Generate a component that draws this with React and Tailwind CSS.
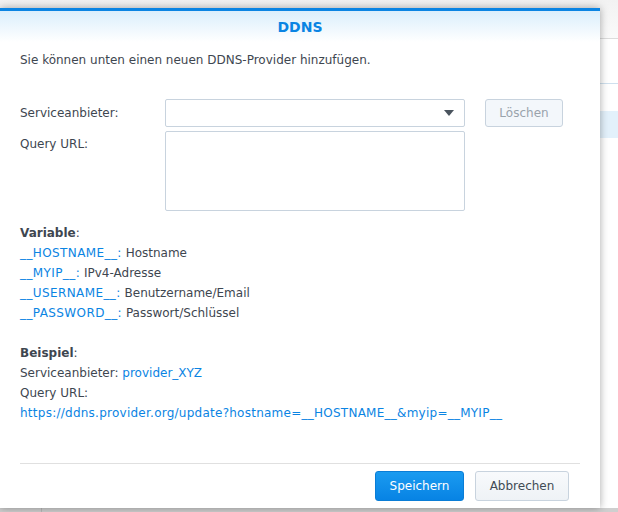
import React from "react";

export default function App() {
  const font = { fontFamily: '"DejaVu Sans", Verdana, sans-serif' };
  const vars = [
    ["__HOSTNAME__", "Hostname"],
    ["__MYIP__", "IPv4-Adresse"],
    ["__USERNAME__", "Benutzername/Email"],
    ["__PASSWORD__", "Passwort/Schlüssel"],
  ];
  return (
    <div
      className="relative w-[618px] h-[512px] overflow-hidden bg-[#f7f8f9]"
      style={font}
    >
      {/* background page */}
      <div className="absolute inset-0 flex flex-col">
        <div className="h-[39px] bg-gradient-to-b from-[#f2f2f2] to-[#fafafa] border-b border-[#dcdcdc]" />
        <div className="h-[45px] bg-white border-b border-[#cfe0ee]" />
        <div className="h-[27px] bg-white" />
        <div className="h-[27px] bg-[#e3f1fb]" />
        <div className="flex-1 bg-white" />
      </div>
      <div className="absolute left-0 right-0 bottom-0 h-[4px] bg-[#cfcfcf] flex">
        <div className="w-[42px] border-r border-[#b8b8b8]" />
      </div>

      {/* dialog */}
      <div className="absolute left-0 top-[8px] w-[600px] h-[500px] bg-white shadow-[0_0_8px_rgba(0,0,0,0.35)] flex flex-col">
        <div className="h-[3px] bg-[#0a84e3]" />
        <div className="h-[31px] bg-gradient-to-b from-[#daeefc] to-white flex items-center justify-center">
          <span className="text-[14px] font-bold text-[#0a84e3] leading-none">DDNS</span>
        </div>
        <div className="flex-1 flex flex-col px-[20px] text-[12px] text-[#3e4650] leading-[20px]">
          <div className="mt-[8px]">Sie können unten einen neuen DDNS-Provider hinzufügen.</div>

          <div className="mt-[29px] flex items-start">
            <div className="w-[145px] h-[28px] flex items-center">Serviceanbieter:</div>
            <div className="w-[300px] h-[28px] border border-[#c8d3de] rounded-[2px] flex items-center justify-end pr-[10px]">
              <svg width="10" height="6" viewBox="0 0 10 6">
                <path d="M0 0 L10 0 L5 6 Z" fill="#4a545e" />
              </svg>
            </div>
            <div className="ml-[20px] w-[78px] h-[28px] border border-[#c8d3de] rounded-[3px] bg-[#f3f7fb] flex items-center justify-center text-[#9aa3ac]">
              Löschen
            </div>
          </div>

          <div className="mt-[4px] flex items-start">
            <div className="w-[145px] pt-[3px]">Query URL:</div>
            <div className="w-[300px] h-[80px] border border-[#c8d3de] rounded-[2px]" />
          </div>

          <div className="mt-[12px]">
            <span className="font-bold">Variable</span>:
          </div>
          {vars.map(([k, v]) => (
            <div key={k}>
              <span className="text-[#0a84e3] tracking-[0.4px]">{k}:</span> {v}
            </div>
          ))}

          <div className="mt-[20px]">
            <span className="font-bold">Beispiel</span>:
          </div>
          <div>
            Serviceanbieter: <span className="text-[#0a84e3]">provider_XYZ</span>
          </div>
          <div>Query URL:</div>
          <div className="text-[#0a84e3] tracking-[0.25px]">
            https://ddns.provider.org/update?hostname=__HOSTNAME__&amp;myip=__MYIP__
          </div>

          <div className="mt-auto border-t border-[#e0e0e0] h-[45px] flex items-center justify-end gap-[11px] pr-[11px]">
            <button className="w-[89px] h-[30px] rounded-[3px] bg-gradient-to-b from-[#1a9bf0] to-[#0783e4] border border-[#0a7dd6] text-white text-[12px]">
              Speichern
            </button>
            <button className="w-[94px] h-[30px] rounded-[3px] bg-gradient-to-b from-[#f8fafc] to-[#eef2f6] border border-[#c8d3de] text-[#414b55] text-[12px]">
              Abbrechen
            </button>
          </div>
        </div>
      </div>
    </div>
  );
}
